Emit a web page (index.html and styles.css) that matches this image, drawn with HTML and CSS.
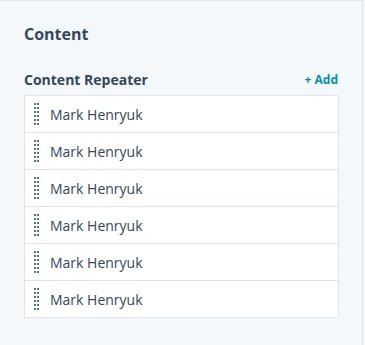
FILE: index.html
```html
<!DOCTYPE html>
<html lang="en">
<head>
  <meta charset="UTF-8" />
  <title>Content</title>
  <link rel="stylesheet" href="styles.css">
</head>
<body>
  <div class="painel">
    <h2 class="titulo">Content</h2>

    <div class="campo-topo">
      <span class="rotulo">Content Repeater</span>
      <button class="btn-add">+ Add</button>
    </div>

    <ul class="repeater">
      <li class="item"><span class="alca"></span><span class="nome">Mark Henryuk</span></li>
      <li class="item"><span class="alca"></span><span class="nome">Mark Henryuk</span></li>
      <li class="item"><span class="alca"></span><span class="nome">Mark Henryuk</span></li>
      <li class="item"><span class="alca"></span><span class="nome">Mark Henryuk</span></li>
      <li class="item"><span class="alca"></span><span class="nome">Mark Henryuk</span></li>
      <li class="item"><span class="alca"></span><span class="nome">Mark Henryuk</span></li>
    </ul>
  </div>
</body>
</html>
```

FILE: styles.css
```css
:root {
  --fundo: #f5f8fa;
  --borda: #dfe3eb;
  --texto: #33475b;
  --teal: #0091ae;
  --alca: #516f90;
}
* {
  box-sizing: border-box;
}
html, body {
  margin: 0;
  background-color: var(--fundo);
}
.painel {
  font-family: 'Open Sans', sans-serif;
  color: var(--texto);
  width: 363px;
  height: 345px;
  border-top: 1px solid var(--borda);
  border-right: 1px solid var(--borda);
  padding: 23px 24px 0 24px;
}
.titulo {
  margin: 0 0 23px;
  font-size: 16px;
  font-weight: 700;
  line-height: 20px;
}
.campo-topo {
  display: flex;
  justify-content: space-between;
  align-items: center;
  height: 24px;
  margin-bottom: 4px;
}
.rotulo {
  font-size: 14px;
  font-weight: 700;
}
.btn-add {
  background: none;
  border: none;
  padding: 0;
  color: var(--teal);
  font-family: inherit;
  font-size: 12px;
  font-weight: 700;
  cursor: pointer;
}
.repeater {
  list-style: none;
  margin: 0;
  padding: 0;
  background-color: white;
  border: 1px solid var(--borda);
  width: 315px;
}
.item {
  display: flex;
  align-items: center;
  height: 37px;
  border-bottom: 1px solid var(--borda);
  padding-left: 9px;
}
.item:last-child {
  height: 36px;
  border-bottom: none;
}
.alca {
  width: 5px;
  height: 22px;
  margin-right: 11px;
  background-image: linear-gradient(90deg, var(--alca) 2px, transparent 2px);
  background-size: 3px 100%;
  -webkit-mask: linear-gradient(#000 2px, transparent 2px) 0 0 / 100% 4px;
  mask: linear-gradient(#000 2px, transparent 2px) 0 0 / 100% 4px;
}
.nome {
  font-size: 14px;
}
```
